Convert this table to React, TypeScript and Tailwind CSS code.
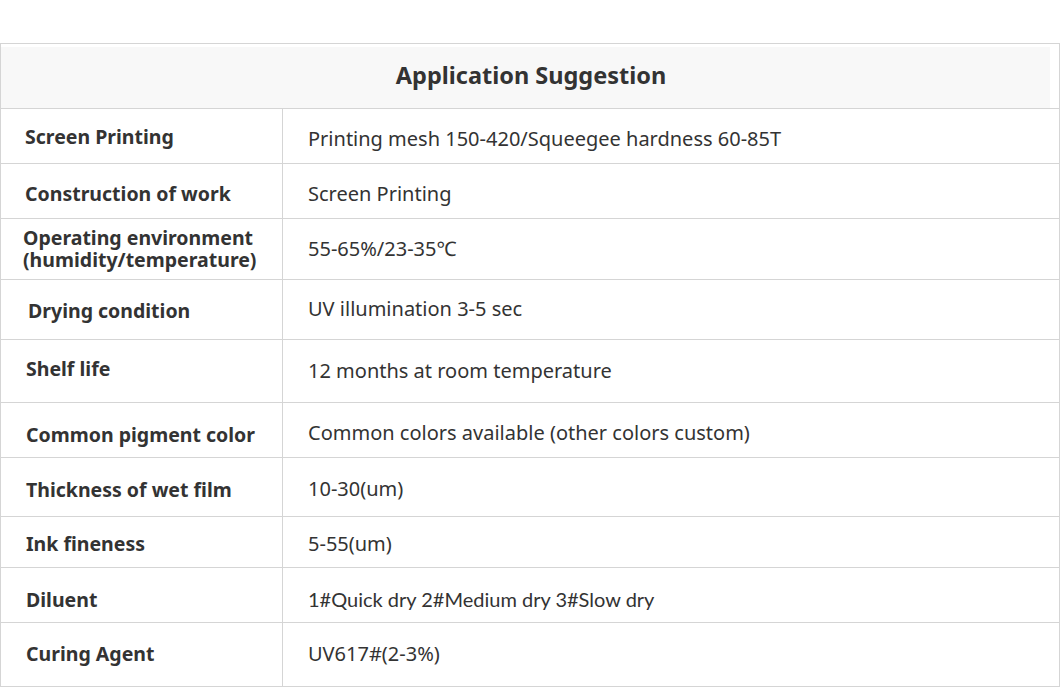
// App.tsx
interface SpecRow {
    label: string;
    value: string;
    height: string;
    labelPad: string;
    valuePad: string;
    valueClass?: string;
}

const rows: SpecRow[] = [
    { label: 'Screen Printing', value: 'Printing mesh 150-420/Squeegee hardness 60-85T', height: 'h-[55px]', labelPad: 'pl-6 pt-[2px]', valuePad: 'pt-[6px]' },
    { label: 'Construction of work', value: 'Screen Printing', height: 'h-[55px]', labelPad: 'pl-6 pt-[6px]', valuePad: 'pt-[6px]' },
    { label: 'Operating environment\n(humidity/temperature)', value: '55-65%/23-35℃', height: 'h-[61px]', labelPad: 'pl-[22px]', valuePad: 'pt-0' },
    { label: 'Drying condition', value: 'UV illumination 3-5 sec', height: 'h-[60px]', labelPad: 'pl-[27px] pt-[2px]', valuePad: 'pb-[2px]' },
    { label: 'Shelf life', value: '12 months at room temperature', height: 'h-[63px]', labelPad: 'pl-[25px] pb-[4px]', valuePad: 'pt-0' },
    { label: 'Common pigment color', value: 'Common colors available (other colors custom)', height: 'h-[55px]', labelPad: 'pl-[25px] pt-[10px]', valuePad: 'pt-[6px]' },
    { label: 'Thickness of wet film', value: '10-30(um)', height: 'h-[59px]', labelPad: 'pl-[25px] pt-[6px]', valuePad: 'pt-[4px]' },
    { label: 'Ink fineness', value: '5-55(um)', height: 'h-[51px]', labelPad: 'pl-[25px] pt-[4px]', valuePad: 'pt-[4px]' },
    { label: 'Diluent', value: '1#Quick dry 2#Medium dry 3#Slow dry', height: 'h-[55px]', labelPad: 'pl-[25px] pt-[10px]', valuePad: 'pt-[8px]', valueClass: 'font-["Lato"] text-[20px] leading-none' },
    { label: 'Curing Agent', value: 'UV617#(2-3%)', height: 'h-[64px]', labelPad: 'pl-[25px] pb-[2px]', valuePad: 'pb-[2px]' },
];

export default function App() {
    return (
        <div className="w-[1060px] h-[687px] bg-white pt-[43px] font-['Noto_Sans',sans-serif] text-[#333]">
            <div className="w-[1060px] border-t border-l border-r border-[#d5d5d5]">
                {/* header */}
                <div className="h-[65px] border-b border-[#d5d5d5] pt-[3px] pr-[9px]">
                    <div className="h-full bg-[#f8f8f8] flex items-center justify-center pl-[11px]">
                        <h2 className="text-[23.5px] font-bold leading-none pb-[4px]">Application Suggestion</h2>
                    </div>
                </div>

                {rows.map((row, i) => (
                    <div
                        key={i}
                        className={`${row.height} grid grid-cols-[282px_1fr] border-b border-[#d5d5d5]`}
                    >
                        <div className={`flex flex-col justify-center border-r border-[#d5d5d5] ${row.labelPad}`}>
                            <p className="text-[19.5px] font-bold leading-[22px] whitespace-pre-line">{row.label}</p>
                        </div>
                        <div className={`flex items-center pl-[25px] ${row.valuePad}`}>
                            <span className={row.valueClass ?? 'text-[20px] leading-none'}>{row.value}</span>
                        </div>
                    </div>
                ))}
            </div>
        </div>
    );
}
